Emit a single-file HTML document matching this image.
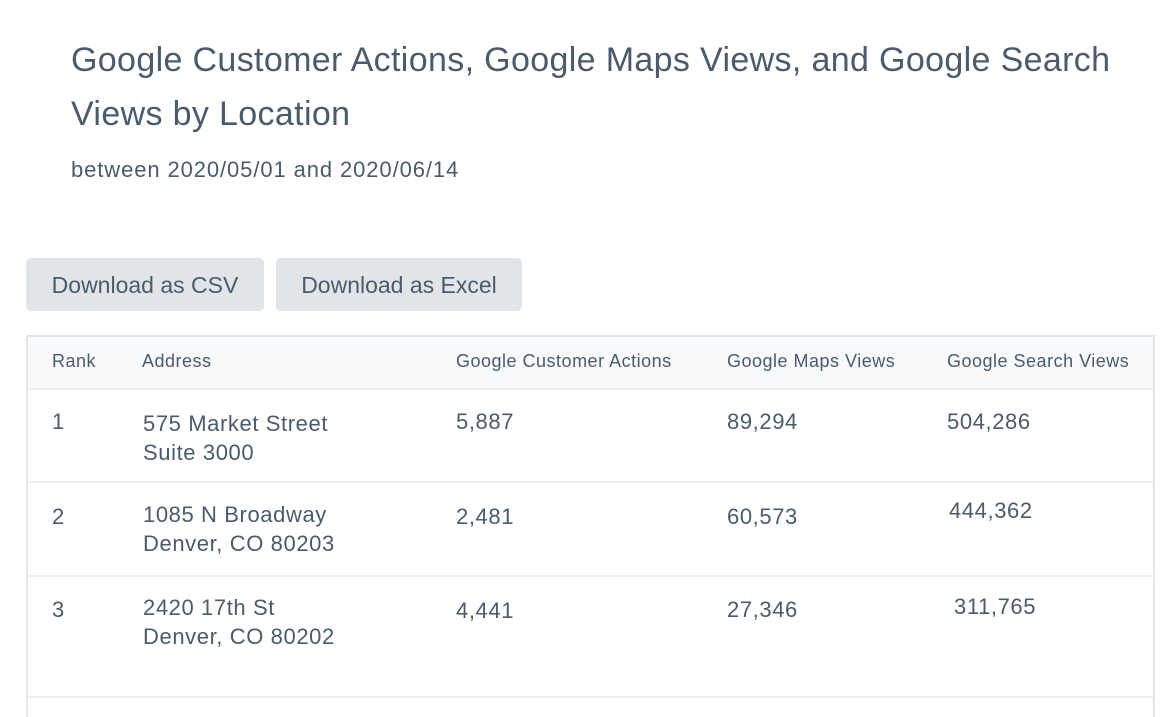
<!DOCTYPE html>
<html><head><style>
body{margin:0;width:1174px;height:706px;background:#fff;font-family:"Liberation Sans",sans-serif;color:#4a5b6b;position:relative;overflow:hidden}
.a{position:absolute;white-space:nowrap}
h1{position:absolute;left:71px;top:33px;margin:0;font-weight:normal;font-size:34px;line-height:54px;width:1090px;color:#4a5b6b;letter-spacing:0.35px}
.btn{position:absolute;top:258px;height:53px;background:#e2e5e8;border-radius:5px;font-size:23px;line-height:55px;text-align:center}
.tbl{position:absolute;left:26px;top:335px;width:1125px;height:380px;border:2px solid #e3e6e9;border-bottom:none}
.hd{position:absolute;left:0;top:0;width:100%;height:51px;background:#f8f9fa;border-bottom:2px solid #eceef0}
.ln{position:absolute;left:0;width:100%;height:2px;background:#eceef0}
.h{font-size:18px;top:351px;letter-spacing:0.5px}
.c{font-size:22px;letter-spacing:0.6px}
</style></head><body>
<h1>Google Customer Actions, Google Maps Views, and Google Search Views by Location</h1>
<div class="a" style="left:71px;top:157px;font-size:22px;letter-spacing:0.9px">between 2020/05/01 and 2020/06/14</div>
<div class="btn" style="left:26px;width:238px">Download as CSV</div>
<div class="btn" style="left:276px;width:246px">Download as Excel</div>
<div class="tbl"><div class="hd"></div>
<div class="ln" style="top:144px"></div><div class="ln" style="top:238px"></div><div class="ln" style="top:359px"></div></div>
<div class="a h" style="left:52px">Rank</div>
<div class="a h" style="left:142px">Address</div>
<div class="a h" style="left:456px">Google Customer Actions</div>
<div class="a h" style="left:727px">Google Maps Views</div>
<div class="a h" style="left:947px">Google Search Views</div>

<div class="a c" style="left:52px;top:409px">1</div>
<div class="a c" style="left:143px;top:409px;line-height:29px">575 Market Street<br>Suite 3000</div>
<div class="a c" style="left:456px;top:409px">5,887</div>
<div class="a c" style="left:727px;top:409px">89,294</div>
<div class="a c" style="left:947px;top:409px">504,286</div>

<div class="a c" style="left:52px;top:504px">2</div>
<div class="a c" style="left:143px;top:500px;line-height:29px">1085 N Broadway<br>Denver, CO 80203</div>
<div class="a c" style="left:456px;top:504px">2,481</div>
<div class="a c" style="left:727px;top:504px">60,573</div>
<div class="a c" style="left:949px;top:498px">444,362</div>

<div class="a c" style="left:52px;top:597px">3</div>
<div class="a c" style="left:143px;top:593px;line-height:29px">2420 17th St<br>Denver, CO 80202</div>
<div class="a c" style="left:456px;top:598px">4,441</div>
<div class="a c" style="left:727px;top:597px">27,346</div>
<div class="a c" style="left:954px;top:594px">311,765</div>
</body></html>
